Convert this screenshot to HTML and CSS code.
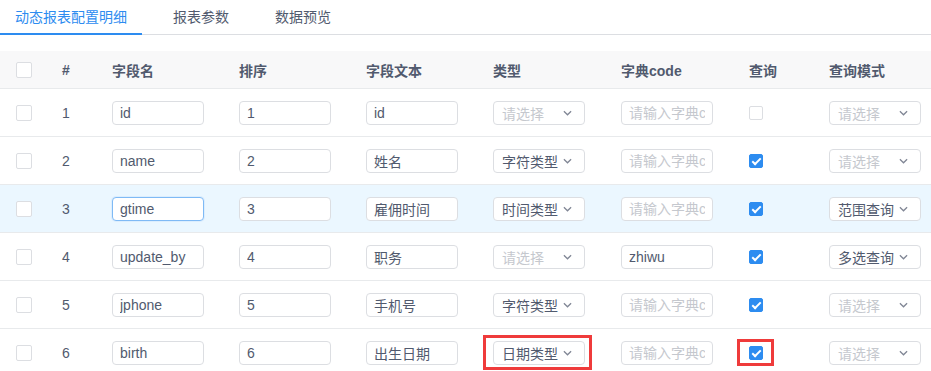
FILE: index.html
```html
<!DOCTYPE html>
<html lang="zh-CN">
<head>
    <meta charset="UTF-8">
    <title>动态报表配置明细</title>
    <link rel="stylesheet" href="styles.css">
</head>
<body>
    <div class="tabs">
        <div class="tab active">动态报表配置明细</div>
        <div class="tab">报表参数</div>
        <div class="tab">数据预览</div>
    </div>

    <div class="table">
        <div class="row head">
            <div class="cell"><span class="check"></span></div>
            <div class="cell">#</div>
            <div class="cell">字段名</div>
            <div class="cell">排序</div>
            <div class="cell">字段文本</div>
            <div class="cell">类型</div>
            <div class="cell">字典code</div>
            <div class="cell">查询</div>
            <div class="cell">查询模式</div>
        </div>

        <div class="row">
            <div class="cell"><span class="check"></span></div>
            <div class="cell">1</div>
            <div class="cell"><input class="field" value="id"></div>
            <div class="cell"><input class="field" value="1"></div>
            <div class="cell"><input class="field" value="id"></div>
            <div class="cell"><div class="select empty"><span>请选择</span><svg class="arrow" viewBox="0 0 10 6"><polyline points="1,1 5,5 9,1"/></svg></div></div>
            <div class="cell"><input class="field" placeholder="请输入字典code"></div>
            <div class="cell"><span class="check small"></span></div>
            <div class="cell"><div class="select empty"><span>请选择</span><svg class="arrow" viewBox="0 0 10 6"><polyline points="1,1 5,5 9,1"/></svg></div></div>
        </div>

        <div class="row">
            <div class="cell"><span class="check"></span></div>
            <div class="cell">2</div>
            <div class="cell"><input class="field" value="name"></div>
            <div class="cell"><input class="field" value="2"></div>
            <div class="cell"><input class="field" value="姓名"></div>
            <div class="cell"><div class="select"><span>字符类型</span><svg class="arrow" viewBox="0 0 10 6"><polyline points="1,1 5,5 9,1"/></svg></div></div>
            <div class="cell"><input class="field" placeholder="请输入字典code"></div>
            <div class="cell"><span class="check small on"></span></div>
            <div class="cell"><div class="select empty"><span>请选择</span><svg class="arrow" viewBox="0 0 10 6"><polyline points="1,1 5,5 9,1"/></svg></div></div>
        </div>

        <div class="row hover">
            <div class="cell"><span class="check"></span></div>
            <div class="cell">3</div>
            <div class="cell"><input class="field focus" value="gtime"></div>
            <div class="cell"><input class="field" value="3"></div>
            <div class="cell"><input class="field" value="雇佣时间"></div>
            <div class="cell"><div class="select"><span>时间类型</span><svg class="arrow" viewBox="0 0 10 6"><polyline points="1,1 5,5 9,1"/></svg></div></div>
            <div class="cell"><input class="field" placeholder="请输入字典code"></div>
            <div class="cell"><span class="check small on"></span></div>
            <div class="cell"><div class="select"><span>范围查询</span><svg class="arrow" viewBox="0 0 10 6"><polyline points="1,1 5,5 9,1"/></svg></div></div>
        </div>

        <div class="row">
            <div class="cell"><span class="check"></span></div>
            <div class="cell">4</div>
            <div class="cell"><input class="field" value="update_by"></div>
            <div class="cell"><input class="field" value="4"></div>
            <div class="cell"><input class="field" value="职务"></div>
            <div class="cell"><div class="select empty"><span>请选择</span><svg class="arrow" viewBox="0 0 10 6"><polyline points="1,1 5,5 9,1"/></svg></div></div>
            <div class="cell"><input class="field" value="zhiwu"></div>
            <div class="cell"><span class="check small on"></span></div>
            <div class="cell"><div class="select"><span>多选查询</span><svg class="arrow" viewBox="0 0 10 6"><polyline points="1,1 5,5 9,1"/></svg></div></div>
        </div>

        <div class="row">
            <div class="cell"><span class="check"></span></div>
            <div class="cell">5</div>
            <div class="cell"><input class="field" value="jphone"></div>
            <div class="cell"><input class="field" value="5"></div>
            <div class="cell"><input class="field" value="手机号"></div>
            <div class="cell"><div class="select"><span>字符类型</span><svg class="arrow" viewBox="0 0 10 6"><polyline points="1,1 5,5 9,1"/></svg></div></div>
            <div class="cell"><input class="field" placeholder="请输入字典code"></div>
            <div class="cell"><span class="check small on"></span></div>
            <div class="cell"><div class="select empty"><span>请选择</span><svg class="arrow" viewBox="0 0 10 6"><polyline points="1,1 5,5 9,1"/></svg></div></div>
        </div>

        <div class="row">
            <div class="cell"><span class="check"></span></div>
            <div class="cell">6</div>
            <div class="cell"><input class="field" value="birth"></div>
            <div class="cell"><input class="field" value="6"></div>
            <div class="cell"><input class="field" value="出生日期"></div>
            <div class="cell"><div class="select marked"><span>日期类型</span><svg class="arrow" viewBox="0 0 10 6"><polyline points="1,1 5,5 9,1"/></svg><i class="mark mark-select"></i></div></div>
            <div class="cell"><input class="field" placeholder="请输入字典code"></div>
            <div class="cell"><span class="check small on marked"><i class="mark mark-check"></i></span></div>
            <div class="cell"><div class="select empty"><span>请选择</span><svg class="arrow" viewBox="0 0 10 6"><polyline points="1,1 5,5 9,1"/></svg></div></div>
        </div>
    </div>
</body>
</html>
```

FILE: styles.css
```css
body {
    margin: 0;
    background: #fff;
    font-family: "Liberation Sans", "Noto Sans CJK SC", sans-serif;
    font-size: 14px;
    color: #515a6e;
    overflow: hidden;
}
.tabs {
    display: flex;
    height: 35px;
    border-bottom: 1px solid #dcdee2;
    box-sizing: border-box;
}
.tab {
    padding: 0 15px;
    margin-right: 16px;
    line-height: 35px;
    height: 35px;
    box-sizing: border-box;
    color: #515a6e;
}
.tab.active {
    color: #2d8cf0;
    border-bottom: 2px solid #2d8cf0;
}
.table {
    margin-top: 16px;
}
.row {
    display: grid;
    grid-template-columns: 46px 50px 127px 127px 127px 128px 128px 80px 1fr;
    height: 48px;
    border-bottom: 1px solid #e8eaec;
    box-sizing: border-box;
    align-items: center;
}
.row.head {
    height: 38px;
    background: #f8f8f9;
    font-weight: bold;
}
.row.hover {
    background: #ebf7ff;
}
.cell {
    padding-left: 16px;
    display: flex;
    align-items: center;
    white-space: nowrap;
}
.check {
    width: 16px;
    height: 16px;
    border: 1px solid #dcdee2;
    border-radius: 2px;
    background: #fff;
    box-sizing: border-box;
    position: relative;
}
.check.small {
    width: 14px;
    height: 14px;
}
.check.on {
    background: #2d8cf0;
    border-color: #2d8cf0;
}
.check.on::after {
    content: "";
    position: absolute;
    left: 4px;
    top: 1px;
    width: 3px;
    height: 7px;
    border: 2px solid #fff;
    border-top: 0;
    border-left: 0;
    transform: rotate(45deg);
}
.field {
    width: 92px;
    height: 24px;
    padding: 0 7px;
    border: 1px solid #dcdee2;
    border-radius: 4px;
    box-sizing: border-box;
    font-family: inherit;
    font-size: 14px;
    color: #515a6e;
    background: #fff;
    outline: none;
}
.field::placeholder {
    color: #c5c8ce;
}
.field.focus {
    border-color: #7fbaf5;
    box-shadow: 0 0 0 1px rgba(45, 140, 240, 0.08);
}
.select {
    width: 92px;
    height: 24px;
    padding: 0 12px 0 8px;
    border: 1px solid #dcdee2;
    border-radius: 4px;
    box-sizing: border-box;
    background: #fff;
    display: flex;
    align-items: center;
    justify-content: space-between;
    position: relative;
}
.select.empty span {
    color: #c5c8ce;
}
.arrow {
    width: 9px;
    height: 6px;
    fill: none;
    stroke: #808695;
    stroke-width: 1.4;
}
.mark {
    position: absolute;
    border: 3px solid #ef3b3b;
    box-sizing: border-box;
}
.mark-select {
    left: -11px;
    top: -7px;
    width: 109px;
    height: 35px;
}
.mark-check {
    left: -13px;
    top: -8px;
    width: 37px;
    height: 27px;
}
```
